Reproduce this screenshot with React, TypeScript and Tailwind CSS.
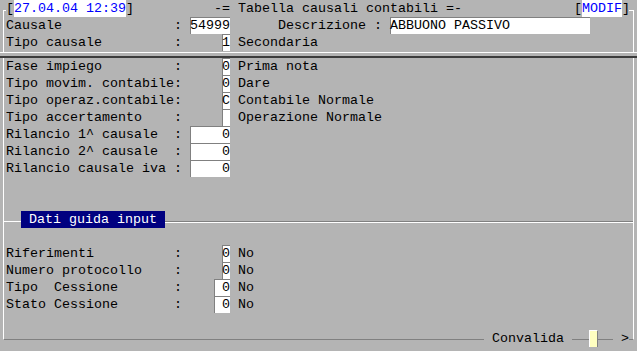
import type { ReactNode } from "react"

// terminal-like screen: every char cell is 8px wide, rows are 17px high
const Field = ({ children, flat = false }: { children: ReactNode; flat?: boolean }) => (
  <span
    className={`inline-block h-[17px] align-top bg-white ${flat ? "" : "shadow-[inset_1px_1px_0_#808080]"}`}
  >
    {children}
  </span>
)

const Row = ({ children }: { children: ReactNode }) => (
  <div className="h-[17px] leading-[17px] whitespace-pre">{children}</div>
)

export default function App() {
  const topRows = [
    { label: "Fase impiego         :     ", value: "0", text: "Prima nota" },
    { label: "Tipo movim. contabile:     ", value: "0", text: "Dare" },
    { label: "Tipo operaz.contabile:     ", value: "C", text: "Contabile Normale" },
    { label: "Tipo accertamento    :     ", value: " ", text: "Operazione Normale" },
    { label: "Rilancio 1^ causale  : ", value: "    0", text: "" },
    { label: "Rilancio 2^ causale  : ", value: "    0", text: "" },
    { label: "Rilancio causale iva : ", value: "    0", text: "" },
  ]

  const guideRows = [
    { label: "Riferimenti          :     ", value: "0", text: "No" },
    { label: "Numero protocollo    :     ", value: "0", text: "No" },
    { label: "Tipo  Cessione       :    ", value: " 0", text: "No" },
    { label: "Stato Cessione       :    ", value: " 0", text: "No" },
  ]

  return (
    <div className="w-[637px] h-[351px] overflow-hidden bg-[#b4b4b4] text-black font-['Liberation_Mono',monospace] text-[13.333px] leading-[17px]">
      {/* header panel */}
      <div className="ml-[3px] mt-[10px] w-[631px] border-x border-t border-white pb-[1px]">
        <div className="-mt-[11px] ml-[2px] mr-[4px] bg-[#b4b4b4]">
          <Row>
            [<Field flat><span className="text-[#0000ff]">27.04.04 12:39</span></Field>]{"          "}-= Tabella causali contabili =-{"              "}[
            <Field flat><span className="text-[#0000ff]">MODIF</span></Field>]
          </Row>
        </div>
        <div className="pl-[2px]">
          <Row>
            Causale{"              "}: <Field>54999</Field>{"      "}Descrizione : <Field>{"ABBUONO PASSIVO          "}</Field>
          </Row>
          <Row>
            Tipo causale{"         "}:     <Field>1</Field> Secondaria
          </Row>
        </div>
      </div>
      <div className="h-px bg-white" />
      <div className="mt-[3px] h-[2px] bg-[#3c3c3c]" />

      {/* main panel */}
      <div className="ml-[3px] w-[631px] h-[282px] flex flex-col border-l border-r border-b border-l-white border-r-white border-b-[#808080]">
        <div className="pl-[2px]">
          {topRows.map((r) => (
            <Row key={r.label}>
              {r.label}
              <Field>{r.value}</Field>
              {r.text ? " " + r.text : ""}
            </Row>
          ))}
        </div>

        <div className="mt-[34px] flex h-[17px]">
          <div className="mt-[10px] w-[17px] h-px bg-white" />
          <span className="h-[17px] leading-[17px] whitespace-pre bg-[#000080] text-white">{" Dati guida input "}</span>
          <div className="mt-[10px] flex-1 h-[2px] border-t border-[#808080] border-b border-b-white" />
        </div>

        <div className="mt-[17px] pl-[2px]">
          {guideRows.map((r) => (
            <Row key={r.label}>
              {r.label}
              <Field>{r.value}</Field> {r.text}
            </Row>
          ))}
        </div>
      </div>

      {/* footer sitting on the bottom border */}
      <div className="-mt-[10px] ml-[3px] w-[631px] h-[17px] flex justify-end pr-[5px]">
        <span className="h-[17px] leading-[17px] whitespace-pre bg-[#b4b4b4]">{" Convalida "}</span>
        <div className="w-[17px]" />
        <div className="w-[9px] h-[17px] bg-[#ffffc0] border-l border-t border-white border-r border-r-[#808080]" />
        <div className="w-[15px]" />
        <span className="h-[17px] leading-[17px] whitespace-pre bg-[#b4b4b4]">{" >"}</span>
      </div>
    </div>
  )
}
